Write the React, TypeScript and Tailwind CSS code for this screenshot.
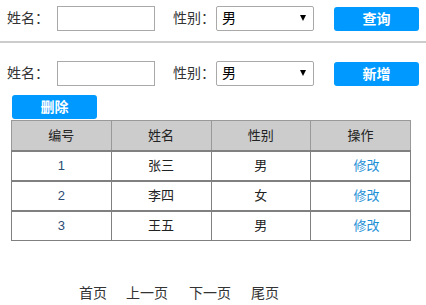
import React from 'react';

const rows = [
  { id: 1, name: '张三', sex: '男' },
  { id: 2, name: '李四', sex: '女' },
  { id: 3, name: '王五', sex: '男' },
];

const font = { fontFamily: '"Liberation Sans", "Noto Sans CJK SC", sans-serif' };

const SexSelect = () => (
  <div className="relative w-[98px] h-[25px]">
    <select className="appearance-none w-full h-full border border-[#a9a9a9] rounded-[2px] bg-white pl-[5px] text-[14px] text-black outline-none">
      <option>男</option>
      <option>女</option>
    </select>
    <span className="pointer-events-none absolute right-[8px] top-[9px] w-0 h-0 border-l-[3px] border-r-[3px] border-t-[6px] border-l-transparent border-r-transparent border-t-black" />
  </div>
);

const Btn = ({ label }: { label: string }) => (
  <button className="w-[85px] h-[24px] rounded-[3px] bg-[#0099ff] text-white text-[14px] font-bold leading-none">
    {label}
  </button>
);

const FormRow = ({ action }: { action: string }) => (
  <div className="flex items-center pl-[7px] text-[14px] text-[#333]">
    <span className="w-[50px]">姓名：</span>
    <input className="w-[98px] h-[25px] border border-[#a9a9a9] outline-none" />
    <span className="ml-[18px] w-[43px]">性别：</span>
    <SexSelect />
    <div className="ml-[20px]">
      <Btn label={action} />
    </div>
  </div>
);

export default function App() {
  return (
    <div className="w-[426px] h-[305px] bg-white" style={font}>
      <div className="pt-[6px]">
        <FormRow action="查询" />
      </div>
      <div className="mt-[10px] h-[2px] bg-[#cccccc]" />
      <div className="pt-[18px]">
        <FormRow action="新增" />
      </div>
      <div className="pl-[12px] pt-[9px]">
        <Btn label="删除" />
      </div>
      <table className="ml-[11px] mt-[1px] w-[400px] border-collapse table-fixed text-[13px] text-[#222]">
        <thead>
          <tr className="bg-[#cccccc] h-[30px]">
            {['编号', '姓名', '性别', '操作'].map((h) => (
              <th key={h} className="border border-[#999] font-normal">
                {h}
              </th>
            ))}
          </tr>
        </thead>
        <tbody>
          {rows.map((r) => (
            <tr key={r.id} className="h-[30px] text-center">
              <td className="border border-[#808080] border-t-2 text-[#2d4b73]">{r.id}</td>
              <td className="border border-[#808080] border-t-2">{r.name}</td>
              <td className="border border-[#808080] border-t-2">{r.sex}</td>
              <td className="border border-[#808080] border-t-2 pl-[12px] text-[#1e90d6]">修改</td>
            </tr>
          ))}
        </tbody>
      </table>
      <div className="mt-[42px] ml-[79px] flex text-[14px] text-[#333]">
        <span>首页</span>
        <span className="ml-[19px]">上一页</span>
        <span className="ml-[21px]">下一页</span>
        <span className="ml-[20px]">尾页</span>
      </div>
    </div>
  );
}
